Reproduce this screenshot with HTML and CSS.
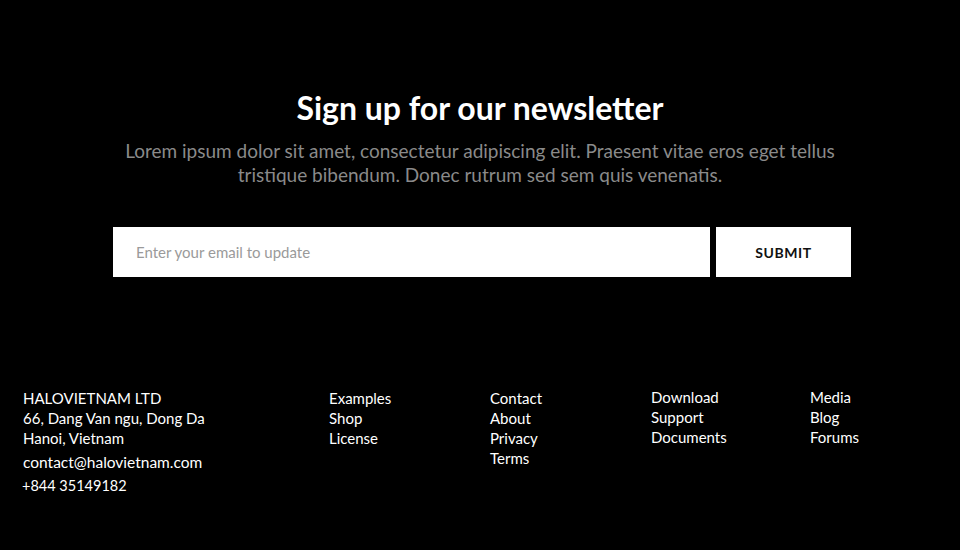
FILE: index.html
```html
<!DOCTYPE html>
<html>
<head>
<meta charset="utf-8">
<link rel="stylesheet" href="styles.css">
</head>
<body>
<section class="newsletter">
  <h1 class="title">Sign up for our newsletter</h1>
  <p class="lead">Lorem ipsum dolor sit amet, consectetur adipiscing elit. Praesent vitae eros eget tellus<br>tristique bibendum. Donec rutrum sed sem quis venenatis.</p>
  <form class="signup">
    <input class="email" type="text" placeholder="Enter your email to update">
    <button class="submit" type="button">SUBMIT</button>
  </form>
</section>
<footer class="footer">
  <div class="col company">
    <div>HALOVIETNAM LTD</div>
    <div>66, Dang Van ngu, Dong Da</div>
    <div>Hanoi, Vietnam</div>
    <div class="contact-line">contact@halovietnam.com</div>
    <div class="contact-line phone">+844 35149182</div>
  </div>
  <ul class="col links">
    <li>Examples</li><li>Shop</li><li>License</li>
  </ul>
  <ul class="col links">
    <li>Contact</li><li>About</li><li>Privacy</li><li>Terms</li>
  </ul>
  <ul class="col links up">
    <li>Download</li><li>Support</li><li>Documents</li>
  </ul>
  <ul class="col links up">
    <li>Media</li><li>Blog</li><li>Forums</li>
  </ul>
</footer>
</body>
</html>
```
FILE: styles.css
```css
html, body {
  margin: 0;
  padding: 0;
  background: #000;
}
body {
  width: 960px;
  height: 550px;
  overflow: hidden;
  font-family: "Lato", "Open Sans", sans-serif;
  color: #fff;
}
.newsletter {
  display: flex;
  flex-direction: column;
  align-items: center;
  padding-top: 88px;
}
.title {
  margin: 0;
  font-size: 32px;
  font-weight: 700;
  line-height: 40px;
  color: #fff;
}
.lead {
  margin: 11px 0 0;
  font-size: 19px;
  line-height: 24px;
  text-align: center;
  color: #8a8a8a;
}
.signup {
  display: flex;
  gap: 6px;
  margin: 40px 0 0 4px;
}
.email {
  width: 597px;
  height: 50px;
  box-sizing: border-box;
  border: none;
  outline: none;
  padding: 0 0 0 23px;
  font-family: inherit;
  font-size: 15px;
  background: #fff;
  color: #333;
}
.email::placeholder {
  color: #9a9a9a;
}
.submit {
  width: 135px;
  height: 50px;
  border: none;
  background: #fff;
  color: #111;
  font-family: inherit;
  font-size: 14px;
  font-weight: 700;
  letter-spacing: 0.6px;
}
.footer {
  display: grid;
  grid-template-columns: 306px 161px 161px 159px 1fr;
  padding: 111px 0 0 23px;
  font-size: 15px;
  line-height: 20px;
}
.col {
  margin: 0;
  padding: 0;
  list-style: none;
}
.contact-line {
  margin-top: 4px;
  font-size: 15.5px;
}
.phone {
  margin-left: -1px;
  font-size: 14.5px;
}
.links li {
  line-height: 20px;
}
.links.up {
  margin-top: -1px;
}
```
